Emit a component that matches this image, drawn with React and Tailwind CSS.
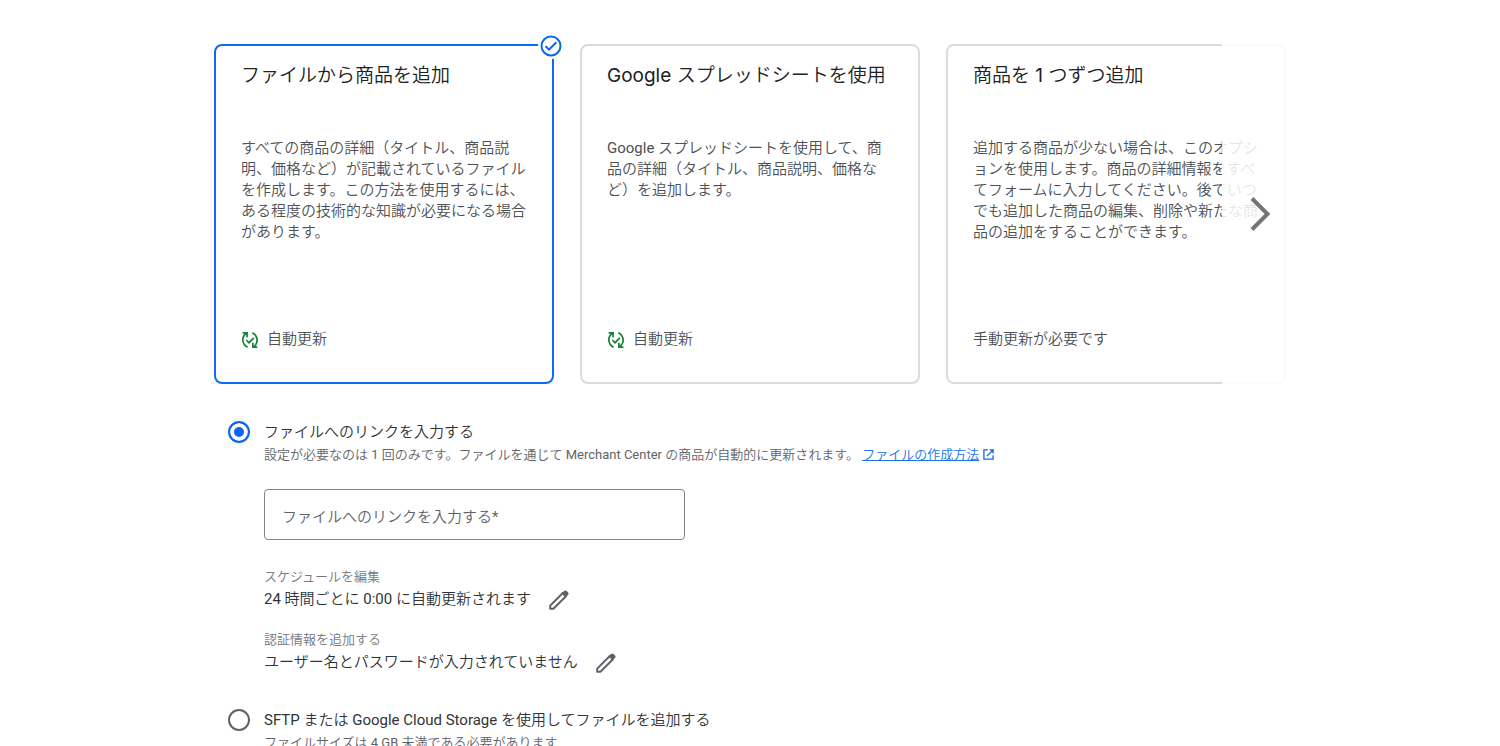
import React, { useState } from 'react';

const methods = [
  {
    id: 'file',
    title: 'ファイルから商品を追加',
    description: 'すべての商品の詳細（タイトル、商品説明、価格など）が記載されているファイルを作成します。この方法を使用するには、ある程度の技術的な知識が必要になる場合があります。',
    auto: true,
    footer: '自動更新'
  },
  {
    id: 'sheet',
    title: 'Google スプレッドシートを使用',
    description: 'Google スプレッドシートを使用して、商品の詳細（タイトル、商品説明、価格など）を追加します。',
    auto: true,
    footer: '自動更新'
  },
  {
    id: 'single',
    title: '商品を 1 つずつ追加',
    description: '追加する商品が少ない場合は、このオプションを使用します。商品の詳細情報をすべてフォームに入力してください。後でいつでも追加した商品の編集、削除や新たな商品の追加をすることができます。',
    auto: false,
    footer: '手動更新が必要です'
  }
];

function CheckBadge() {
  return <span className="absolute -top-[13px] -right-3 flex size-[26px] items-center justify-center rounded-full bg-white">
      <svg width="22" height="22" viewBox="0 0 22 22" fill="none" stroke="#0b66ef" strokeWidth="2">
        <circle cx="11" cy="11" r="9.5" />
        <path d="M5.6 11.2l3.4 3.4 7.3-7.4" />
      </svg>
    </span>;
}

function AutoUpdateIcon() {
  return <svg width="18" height="18" viewBox="0 0 18 18" fill="none" stroke="#188038" strokeWidth="1.7">
      <path d="M1.6 1.8h4.5v4.5M5.8 2.2C.6 5 .2 12.6 6.6 16.2" />
      <path d="M16.4 16.2h-4.5v-4.5M12.2 15.8c5.2-2.8 5.6-10.4-.8-14" />
      <path d="M5.3 9l2.7 2.7 4.8-4.8" />
    </svg>;
}

function OpenIcon() {
  return <svg width="11" height="11" viewBox="0 0 11 11" fill="none" stroke="#0b66ef" strokeWidth="1.3" className="ml-1 inline align-[-1px]">
      <path d="M4.8.9H.9v9.2h9.2V6.2M6.6.9h3.5v3.5M10 1L3.9 7.1" />
    </svg>;
}

function PencilIcon() {
  return <svg width="20" height="20" viewBox="0 0 20 20" fill="none">
      <path d="M1.2 18.8v-3.2L13.8 3l3.2 3.2L4.4 18.8z" stroke="#5f6368" strokeWidth="2" strokeLinejoin="round" />
      <path d="M12.6 3.4l2.3-2.3a2 2 0 0 1 2.8 0l1.2 1.2a2 2 0 0 1 0 2.8l-2.3 2.3z" fill="#5f6368" />
    </svg>;
}

function MethodCard({ method, selected, onSelect }) {
  return <button type="button" aria-pressed={selected} onClick={onSelect} className={`relative flex min-h-[340px] flex-col rounded-lg border-2 bg-white pt-[17px] pr-6 pb-8 pl-[25px] text-left ${selected ? 'border-[#116bf0]' : 'border-[#dadce0]'}`}>
      {selected && <CheckBadge />}
      <span className="font-['Inter','Noto_Sans_CJK_JP_DemiLight','Noto_Sans_CJK_JP',sans-serif] text-[19px] leading-[26px] text-[#202124]">{method.title}</span>
      <span className="mt-[49px] text-[15px] leading-[21px] text-[#4d5156]">{method.description}</span>
      <span className="mt-auto flex items-center gap-2 text-[15px] leading-[21px] text-[#4d5156]">
        {method.auto && <AutoUpdateIcon />}
        {method.footer}
      </span>
    </button>;
}

function SourceOption({ id, checked, onChange, title, children }) {
  return <div className="flex gap-[14px]">
      <input type="radio" id={id} name="source" checked={checked} onChange={onChange} className="mt-px size-[22px] shrink-0 appearance-none rounded-full border-2 border-[#5f6368] bg-white checked:border-[#0b66ef] checked:bg-[#0b66ef] checked:shadow-[inset_0_0_0_4px_white]" />
      <div className="min-w-0 flex-1">
        <label htmlFor={id} className="block text-[15px] leading-6 text-[#303438]">{title}</label>
        {children}
      </div>
    </div>;
}

function EditableSetting({ label, value }) {
  return <div>
      <div className="text-[13px] leading-5 text-[#74797e]">{label}</div>
      <div className="flex items-center gap-[18px] text-[15px] leading-6 text-[#303438]">
        {value}
        <button type="button" aria-label={label} className="pt-[2px]">
          <PencilIcon />
        </button>
      </div>
    </div>;
}

export default function App() {
  const [method, setMethod] = useState('file');
  const [source, setSource] = useState('link');
  const [url, setUrl] = useState('');
  return <main lang="ja" className="min-h-screen bg-white px-6 pt-11 font-['Roboto','Noto_Sans_CJK_JP_DemiLight','Noto_Sans_CJK_JP',sans-serif]">
      <div className="mx-auto max-w-[1072px]">
        <div className="relative grid grid-cols-3 gap-[26px]">
          {methods.map(item => <MethodCard key={item.id} method={item} selected={method === item.id} onSelect={() => setMethod(item.id)} />)}
          {/* fade over the last card with the scroll button */}
          <div className="absolute inset-y-0 right-0 flex w-16 items-center justify-center bg-white/85">
            <button type="button" aria-label="次へ" className="pl-[14px]">
              <svg width="24" height="36" viewBox="0 0 24 36" fill="none" stroke="#757575" strokeWidth="4">
                <path d="M3 2.5L18.5 18 3 33.5" />
              </svg>
            </button>
          </div>
        </div>

        <div className="mt-9 flex flex-col gap-[34px] pl-[14px]">
          <SourceOption id="source-link" title="ファイルへのリンクを入力する" checked={source === 'link'} onChange={() => setSource('link')}>
            <p className="text-[13px] leading-[22px] text-[#5f6368]">
              設定が必要なのは 1 回のみです。ファイルを通じて Merchant Center の商品が自動的に更新されます。{' '}
              <a href="#guide" className="text-[#1a73e8]">
                <span className="underline">ファイルの作成方法</span>
                <OpenIcon />
              </a>
            </p>
            <input type="text" aria-label="ファイルへのリンクを入力する" placeholder="ファイルへのリンクを入力する*" value={url} onChange={e => setUrl(e.target.value)} className="mt-[23px] block h-[51px] w-full max-w-[421px] rounded border border-[#80868b] px-[17px] pt-1 text-[15px] text-[#303438] placeholder:text-[#5f6368]" />
            <div className="mt-[27px] flex flex-col gap-[19px]">
              <EditableSetting label="スケジュールを編集" value="24 時間ごとに 0:00 に自動更新されます" />
              <EditableSetting label="認証情報を追加する" value="ユーザー名とパスワードが入力されていません" />
            </div>
          </SourceOption>
          <SourceOption id="source-sftp" title="SFTP または Google Cloud Storage を使用してファイルを追加する" checked={source === 'sftp'} onChange={() => setSource('sftp')}>
            <p className="text-[13px] leading-[22px] text-[#5f6368]">ファイルサイズは 4 GB 未満である必要があります</p>
          </SourceOption>
        </div>
      </div>
    </main>;
}
